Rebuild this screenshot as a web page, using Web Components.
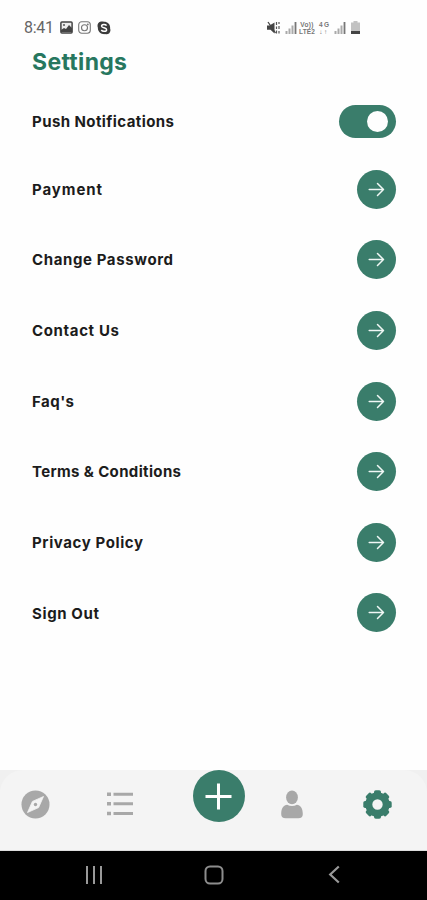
<!DOCTYPE html>
<html lang="en">
<head>
<meta charset="utf-8">
<title>Settings</title>
<style>
html,body{margin:0;height:100%}
body{background:#fefefe;font-family:Inter,"Liberation Sans",sans-serif;overflow:hidden}
</style>
</head>
<body>
<settings-app></settings-app>
<script>
const define = (name, html, ready) => customElements.define(name, class extends HTMLElement {
  constructor() {
    super();
    this.attachShadow({mode: 'open'});
    const t = document.createElement('template');
    t.innerHTML = html;
    this.shadowRoot.append(t.content.cloneNode(true));
  }
  connectedCallback() { if (ready) ready(this); }
});

// Text tracked so that it fills the width given in its attribute.
define('tracked-text', `<style>:host{display:inline-block;white-space:nowrap}span{display:inline-block}</style><span><slot></slot></span>`, el => {
  const s = el.shadowRoot.querySelector('span');
  const n = el.textContent.length;
  s.style.letterSpacing = '0px';
  const gap = (Number(el.getAttribute('width')) - s.getBoundingClientRect().width) / (n - 1);
  s.style.letterSpacing = gap.toFixed(3) + 'px';
});

define('status-bar', `<style>
:host{display:flex;height:46px;box-sizing:border-box;padding:20px 67px 0 24px;justify-content:space-between;align-items:flex-start;color:#666}
div{display:flex;align-items:center;height:15px}
.time{font:16px/15px Roboto,sans-serif;margin-right:6px}
.l svg{margin-right:5.500px}
.net{font:bold 6.5px/7px "Liberation Sans",sans-serif;text-align:center;color:#777}
svg{display:block}
</style>
<div class="l"><tracked-text class="time" width="30">8:41</tracked-text>
<svg width="13" height="13" viewBox="0 0 13 13"><rect x=".9" y=".9" width="11.2" height="11" rx="1" fill="#eee" stroke="#444" stroke-width="1.5"/><path d="M1 11V9l3-2 2 1 3-4 3 3v4z" fill="#444"/><circle cx="4" cy="4" r="1" fill="#555"/></svg>
<svg width="13" height="13" viewBox="0 0 13 13" fill="none" stroke="#777" stroke-width="1.1"><rect x=".7" y=".7" width="11.6" height="11.6" rx="3"/><circle cx="6.5" cy="6.7" r="3"/><circle cx="9.8" cy="3.4" r=".4"/></svg>
<svg width="14" height="14" viewBox="0 0 14 14"><path d="M4 .6C5.2.2 6.2.6 7 .7c4 0 6.500 3 6.100 6.700 1.400 3.500-1.600 6.800-5 5.700C4 13.500.6 10.500.9 6.700-.2 4 1 1 4 .6z" fill="#3b3b3b"/><path d="M9.600 4.700C8.500 3 4.500 3.200 4.600 5.200c.1 2 5 1.300 5 3.500 0 2-4 2.300-5.300.3" fill="none" stroke="#fff" stroke-width="1.500"/></svg>
</div>
<div class="r">
<svg width="13" height="13" viewBox="0 0 13 13"><path d="M0 4.500h2.500L7.500 1.500v11L3.500 8.800H0z" fill="#444"/><path d="M1 1l7.500 11" stroke="#444" stroke-width="1.300"/><path d="M9.500 1v3M12 1v2M9.500 5.500v2.500M12 5v3M9.500 9.500v3M12 10v2.500" stroke="#555" stroke-width="1.200"/></svg>
<svg style="margin-left:5px" width="12" height="13" viewBox="0 0 12 13"><path d="M1.500 10v3M4.500 7.500V13M7.500 4.500V13" stroke="#aaa" stroke-width="2"/><path d="M10.500 1v12" stroke="#777" stroke-width="1.800"/></svg>
<span class="net" style="width:16px;margin-left:2px"><tracked-text width="13">Vo))</tracked-text><br><tracked-text width="16">LTE2</tracked-text></span>
<span class="net" style="width:10px;margin-left:4px"><tracked-text width="10">4G</tracked-text><br><tracked-text width="8">↓↑</tracked-text></span>
<svg style="margin-left:5px" width="12" height="13" viewBox="0 0 12 13"><path d="M1.500 10v3M4.500 7.500V13M7.500 4.500V13" stroke="#aaa" stroke-width="2"/><path d="M10.500 1v12" stroke="#777" stroke-width="1.800"/></svg>
<svg style="margin-left:5px" width="9" height="13" viewBox="0 0 9 13"><path d="M2.500 0h4v1.500H9V13H0V1.500h2.500z" fill="#c2c2c2"/><path d="M0 10h9v3H0z" fill="#444"/></svg>
</div>`);

define('toggle-switch', `<style>
:host{display:flex;box-sizing:border-box;width:57px;height:33px;border-radius:17px;background:#3a7d6b;padding:0 8px;align-items:center;justify-content:flex-end}
i{width:21px;height:21px;border-radius:50%;background:#fefefe}
</style><i></i>`);

define('arrow-button', `<style>
:host{display:flex;width:39px;height:39px;border-radius:50%;background:#3a7d6b;align-items:center;justify-content:center}
</style><svg width="17" height="15" viewBox="0 0 17 15" fill="none" stroke="#f0f7f5" stroke-width="1.500" stroke-linecap="round" stroke-linejoin="round"><path d="M1.200 7.500h14.300M9.500 1.500l6 6-6 6"/></svg>`);

define('settings-row', `<style>
:host{display:flex;height:70.67px;align-items:center;justify-content:space-between;color:#1c1c1c;font-weight:650;font-size:15px;line-height:20px}
div{padding-top:1.400px}
</style><div><slot></slot></div><slot name="control"></slot>`);

define('nav-bar', `<style>
:host{display:block;height:81px;background:#f0f0f0}
nav{height:81px;box-sizing:border-box;background:#f4f4f4;border-radius:23px 23px 0 0;display:grid;grid-template-columns:71px 98px 99px 48px 111px;justify-items:center;align-items:start;border-bottom:1px solid #ddd}
svg{display:block}
.i{margin-top:20px}
#gear{margin-left:12px}
.add{width:52px;height:52px;border-radius:50%;background:#3a7d6b;display:flex;align-items:center;justify-content:center}
</style><nav>
<svg class="i" width="29" height="29" viewBox="0 0 29 29"><circle cx="14.500" cy="14.500" r="14" fill="#a8a8a8"/><path d="M22.500 6.500L17.600 17.600 6.500 22.500 11.400 11.400z" fill="#f4f4f4" stroke="#f4f4f4" stroke-width=".8"/><circle cx="14.500" cy="14.500" r="1.700" fill="#a8a8a8"/></svg>
<svg class="i" width="26" height="29" viewBox="0 0 26 29" fill="#a8a8a8"><path d="M0 2.500h4v3.500H0zM0 12h4v3.500H0zM0 21.700h4v3.500H0zM6.500 2.700H26v3H6.500zM6.500 12.200H26v3H6.500zM6.500 21.900H26v3H6.500z"/></svg>
<div class="add"><svg width="27" height="27" viewBox="0 0 27 27"><path d="M13.500.5v26M.5 13.500h26" stroke="#fff" stroke-width="3"/></svg></div>
<svg class="i" width="24" height="29" viewBox="0 0 24 29" fill="#a8a8a8"><ellipse cx="12" cy="7.400" rx="5.900" ry="6.900"/><path d="M1.200 24c0-6 2.500-9 6-9.300 3 1.600 6.600 1.600 9.600 0 3.500.3 6 3.300 6 9.300 0 3-1.500 4.200-4.500 4.200H5.700c-3 0-4.500-1.200-4.500-4.200z"/></svg>
<svg class="i" id="gear" width="29" height="29" viewBox="-14.500 -14.500 29 29"><g fill="#3a7d6b"></g><circle r="8.700" fill="none" stroke="#3a7d6b" stroke-width="7"/></svg>
</nav>`, el => {
  const g = el.shadowRoot.querySelector('#gear g');
  g.innerHTML = [0,45,90,135,180,225,270,315].map(a => `<rect x="-3.500" y="-14.200" width="7" height="6" rx="1.800" transform="rotate(${a})"/>`).join('');
});

define('system-bar', `<style>
:host{display:grid;grid-template-columns:188px 51px 189px;height:49px;box-sizing:border-box;padding-bottom:2px;background:#000;justify-items:center;align-items:center}
svg{display:block}
</style>
<svg width="18" height="18" viewBox="0 0 18 18" stroke="#999" stroke-width="2"><path d="M2 0v18M9 0v18M16 0v18"/></svg>
<svg width="20" height="20" viewBox="0 0 20 20"><rect x="1.500" y="1.500" width="17" height="17" rx="4.500" fill="none" stroke="#8d8d8d" stroke-width="2"/></svg>
<svg width="12" height="19" viewBox="0 0 12 19"><path d="M10.800 1.500L2.200 9.500l8.600 8" fill="none" stroke="#999" stroke-width="2.200"/></svg>`);

define('settings-app', `<style>
:host{display:flex;flex-direction:column;width:427px;height:900px;background:#fefefe}
main{flex:1;padding:0 31px 0 32px}
h1{margin:0;height:32px;font:700 23px/33px Inter,sans-serif;color:#27775f}
.push{height:87px}
.rows{display:block;margin-top:-11.300px}
</style>
<status-bar></status-bar>
<main>
<h1><tracked-text width="95">Settings</tracked-text></h1>
<settings-row class="push"><tracked-text width="142">Push Notifications</tracked-text><toggle-switch slot="control"></toggle-switch></settings-row>
<div class="rows">
<settings-row><tracked-text width="70">Payment</tracked-text><arrow-button slot="control"></arrow-button></settings-row>
<settings-row><tracked-text width="141">Change Password</tracked-text><arrow-button slot="control"></arrow-button></settings-row>
<settings-row><tracked-text width="87">Contact Us</tracked-text><arrow-button slot="control"></arrow-button></settings-row>
<settings-row><tracked-text width="42">Faq's</tracked-text><arrow-button slot="control"></arrow-button></settings-row>
<settings-row><tracked-text width="149">Terms &amp; Conditions</tracked-text><arrow-button slot="control"></arrow-button></settings-row>
<settings-row><tracked-text width="111">Privacy Policy</tracked-text><arrow-button slot="control"></arrow-button></settings-row>
<settings-row><tracked-text width="67">Sign Out</tracked-text><arrow-button slot="control"></arrow-button></settings-row>
</div>
</main>
<nav-bar></nav-bar>
<system-bar></system-bar>`);
</script>
</body>
</html>
